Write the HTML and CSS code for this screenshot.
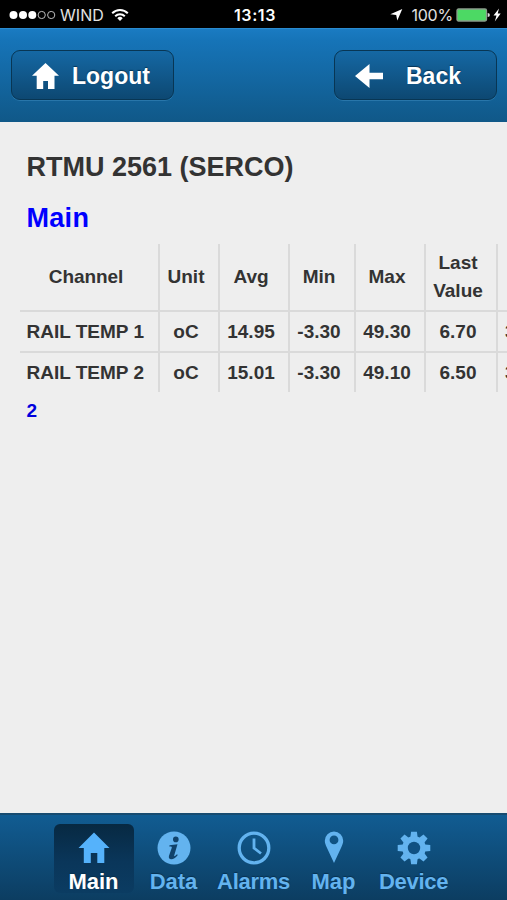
FILE: index.html
```html
<!DOCTYPE html>
<html lang="en">
<head>
<meta charset="utf-8">
<title>RTMU 2561</title>
<link rel="stylesheet" href="styles.css">
</head>
<body>
<div class="status">
  <div class="carrier">
    <svg class="dots" width="47" height="10" viewBox="0 0 47 10"><g fill="#fff"><circle cx="4.5" cy="5" r="4"/><circle cx="14" cy="5" r="4"/><circle cx="23.3" cy="5" r="4"/></g><g fill="none" stroke="#bbb" stroke-width="1"><circle cx="32.7" cy="5" r="3.6"/><circle cx="42.2" cy="5" r="3.6"/></g></svg>
    <span class="net">WIND</span>
    <svg class="wifi" width="18" height="14" viewBox="0 0 18 14" fill="none" stroke="#fff" stroke-width="2"><path d="M1.2 5.2a11 11 0 0 1 15.6 0M4.2 8.2a6.8 6.8 0 0 1 9.6 0"/><path d="M9 13 6.3 10.2a3.8 3.8 0 0 1 5.4 0z" fill="#fff" stroke="none"/></svg>
  </div>
  <span class="time">13:13</span>
  <div class="power">
    <svg width="13" height="12" viewBox="0 0 13 12" fill="#fff"><path d="M12.3 0 7.3 11.5 6.2 6.1.3 5.2z"/></svg>
    <span class="percent">100%</span>
    <svg width="45" height="14" viewBox="0 0 45 14"><rect x="1" y="1" width="29.5" height="12" rx="1.5" fill="#4cd964" stroke="#8b9c8c" stroke-width="1.3"/><path d="M31.7 5q2.2.2 2.2 2t-2.2 2z" fill="#ddd"/><path d="M43 0.5 37.5 7.6h3L38.8 13.5 44.7 5.6h-3z" fill="#fff"/></svg>
  </div>
</div>
<header class="toolbar">
  <a class="button logout"><svg width="27" height="26" viewBox="0 0 27 26"><path d="M13.5 0 27 12.7h-4.5V26H16v-8h-4.8v8H4.7V12.7H0z" fill="#fff"/></svg><span>Logout</span></a>
  <a class="button back"><svg width="28" height="24" viewBox="0 0 28 24"><path d="M0 12 14.5 0v8.8H28v6.4H14.5V24z" fill="#fff"/></svg><span>Back</span></a>
</header>
<main class="content">
  <h1>RTMU 2561 (SERCO)</h1>
  <h2>Main</h2>
  <table>
    <colgroup><col class="c1"><col class="c2"><col class="c3"><col class="c4"><col class="c5"><col class="c6"><col class="c7"></colgroup>
    <thead><tr><th>Channel</th><th>Unit</th><th>Avg</th><th>Min</th><th>Max</th><th>Last<br>Value</th><th></th></tr></thead>
    <tbody>
      <tr><td>RAIL TEMP 1</td><td>oC</td><td>14.95</td><td>-3.30</td><td>49.30</td><td>6.70</td><td>3</td></tr>
      <tr><td>RAIL TEMP 2</td><td>oC</td><td>15.01</td><td>-3.30</td><td>49.10</td><td>6.50</td><td>3</td></tr>
    </tbody>
  </table>
  <p class="count">2</p>
</main>
<nav class="tabs">
  <a class="tab active"><svg width="34" height="34" viewBox="0 0 34 34"><path d="M17 1.5 32.5 17h-5.2v15h-7v-10h-6.5v10h-7V17H1.5z" fill="#55b2fb"/></svg><span>Main</span></a>
  <a class="tab"><svg width="34" height="34" viewBox="0 0 34 34"><circle cx="17" cy="17" r="16.5" fill="#63b3ef"/><g fill="#10436c"><circle cx="18.8" cy="8.4" r="2.8"/><path d="M12.5 14.2l8-1-3.3 11.2c-.3 1.2.6 1 2.8-1.2l.8.8c-2.4 3.1-4.4 4.2-6.4 4.2-2.2 0-3-1.4-2.4-3.5L14.7 17c.4-1.3 0-1.5-2.4-1.6z"/></g></svg><span>Data</span></a>
  <a class="tab alarms"><svg width="34" height="34" viewBox="0 0 34 34" fill="none" stroke="#63b3ef"><circle cx="17" cy="17" r="14.8" stroke-width="3.3"/><path d="M17 7.5V17l7 5.5" stroke-width="2.8"/></svg><span>Alarms</span></a>
  <a class="tab"><svg width="34" height="34" viewBox="0 0 34 34"><path fill-rule="evenodd" d="M17 .5a9.2 9.2 0 0 1 9.2 9.2c0 2.2-.9 4.5-2 6.8L17 32 9.8 16.5c-1.1-2.3-2-4.6-2-6.8A9.2 9.2 0 0 1 17 .5zm0 4a4.4 4.4 0 1 0 0 8.8 4.4 4.4 0 0 0 0-8.8z" fill="#63b3ef"/></svg><span>Map</span></a>
  <a class="tab device"><svg width="34" height="34" viewBox="0 0 34 34"><g fill="#63b3ef"><path id="tooth" d="M13.4 6 14.1.7h5.8l.7 5.3v22l-.7 5.3h-5.8l-.7-5.3z"/><use href="#tooth" transform="rotate(45 17 17)"/><use href="#tooth" transform="rotate(90 17 17)"/><use href="#tooth" transform="rotate(135 17 17)"/><circle cx="17" cy="17" r="11.8"/></g><circle cx="17" cy="17" r="6.2" fill="#105183"/></svg><span>Device</span></a>
</nav>
</body>
</html>
```
FILE: styles.css
```css
* { box-sizing: border-box; }
body {
  margin: 0;
  width: 507px;
  height: 900px;
  overflow: hidden;
  display: flex;
  flex-direction: column;
  background: #eee;
  color: #333;
  font-family: "Liberation Sans", Arial, sans-serif;
  font-weight: bold;
}
svg { display: block; flex: none; }
.status {
  height: 28px;
  flex: none;
  padding: 2px 6px 0 9px;
  display: grid;
  grid-template-columns: 1fr auto 1fr;
  align-items: center;
  background: #000;
  color: #fff;
  font-family: Inter, "Liberation Sans", sans-serif;
  font-size: 16px;
  line-height: 26px;
}
.carrier, .power { display: flex; align-items: center; font-weight: 400; color: #e2e2e2; }
.net { margin-left: 4px; letter-spacing: .05px; }
.wifi { margin-left: 7px; }
.time { font-weight: 600; letter-spacing: .6px; }
.power { justify-content: flex-end; }
.percent { margin: 0 3px 0 8px; letter-spacing: -.2px; }
.toolbar {
  height: 94px;
  flex: none;
  padding: 21px 10px 0 11px;
  display: flex;
  justify-content: space-between;
  align-items: flex-start;
  background: linear-gradient(#1a7bc2, #1674b8 12%, #105888);
  border-top: 1px solid #2a8bd0;
  color: #fff;
}
.button {
  width: 163px;
  height: 50px;
  border: 1.5px solid #083654;
  border-radius: 9px;
  display: flex;
  align-items: center;
  font-size: 23px;
  text-shadow: 0 -1px 1px #063556;
  background: linear-gradient(#1568a4, #0d4872);
  box-shadow: 0 1px 0 #2876aa;
}
.button span { padding-top: 2px; }
.button svg { margin-top: 2px; }
.logout { padding-left: 20px; gap: 13px; }
.back { padding-left: 20px; gap: 23px; }
.content { flex: 1; min-height: 0; padding: 29px 0 0 20px; overflow: hidden; }
h1, h2 { margin: 0 0 0 6.5px; font-size: 27px; line-height: 32px; white-space: nowrap; }
h2 { margin-top: 19px; color: #00f; letter-spacing: .3px; }
table {
  width: 549px;
  margin-top: 10px;
  table-layout: fixed;
  border-collapse: separate;
  border-spacing: 0;
  font-size: 19px;
  line-height: 28px;
}
.c1 { width: 140px; }
.c2 { width: 60px; }
.c3 { width: 70px; }
.c4 { width: 66px; }
.c5 { width: 70px; }
.c6 { width: 72px; }
.c7 { width: 71px; }
th, td { padding: 0; text-align: center; border-right: 2px solid #dadada; border-bottom: 2px solid #dadada; white-space: nowrap; }
th { height: 68px; }
td { height: 41px; }
th:first-child { padding-right: 6px; letter-spacing: -.1px; }
td:first-child { text-align: left; padding-left: 6.5px; }
td:last-child { text-align: left; padding-left: 7px; }
th:nth-child(n+2):nth-child(-n+6), td:nth-child(n+2):nth-child(-n+6) { padding-right: 6px; }
tbody tr:last-child td { border-bottom: 0; height: 39px; }
.count { margin: 5px 0 0 6.5px; font-size: 19px; line-height: 28px; color: #00d; }
.tabs {
  height: 87px;
  flex: none;
  display: flex;
  justify-content: center;
  padding: 9px 0 0;
  border-top: 2px solid #174b70;
  background: linear-gradient(#115c92, #0c3d61);
  color: #63b3ef;
}
.tab {
  width: 80px;
  height: 69px;
  padding-top: 7px;
  display: flex;
  flex-direction: column;
  align-items: center;
  border-radius: 6px;
  font-size: 22px;
  line-height: 28px;
  text-shadow: 0 -1px 1px #07304f;
}
.tab.active { color: #fff; background: linear-gradient(#072942, #0a365a 55%, #0b3c62); }
.tab span { margin-top: 3px; }
.alarms span, .device span { letter-spacing: -.3px; }
```
